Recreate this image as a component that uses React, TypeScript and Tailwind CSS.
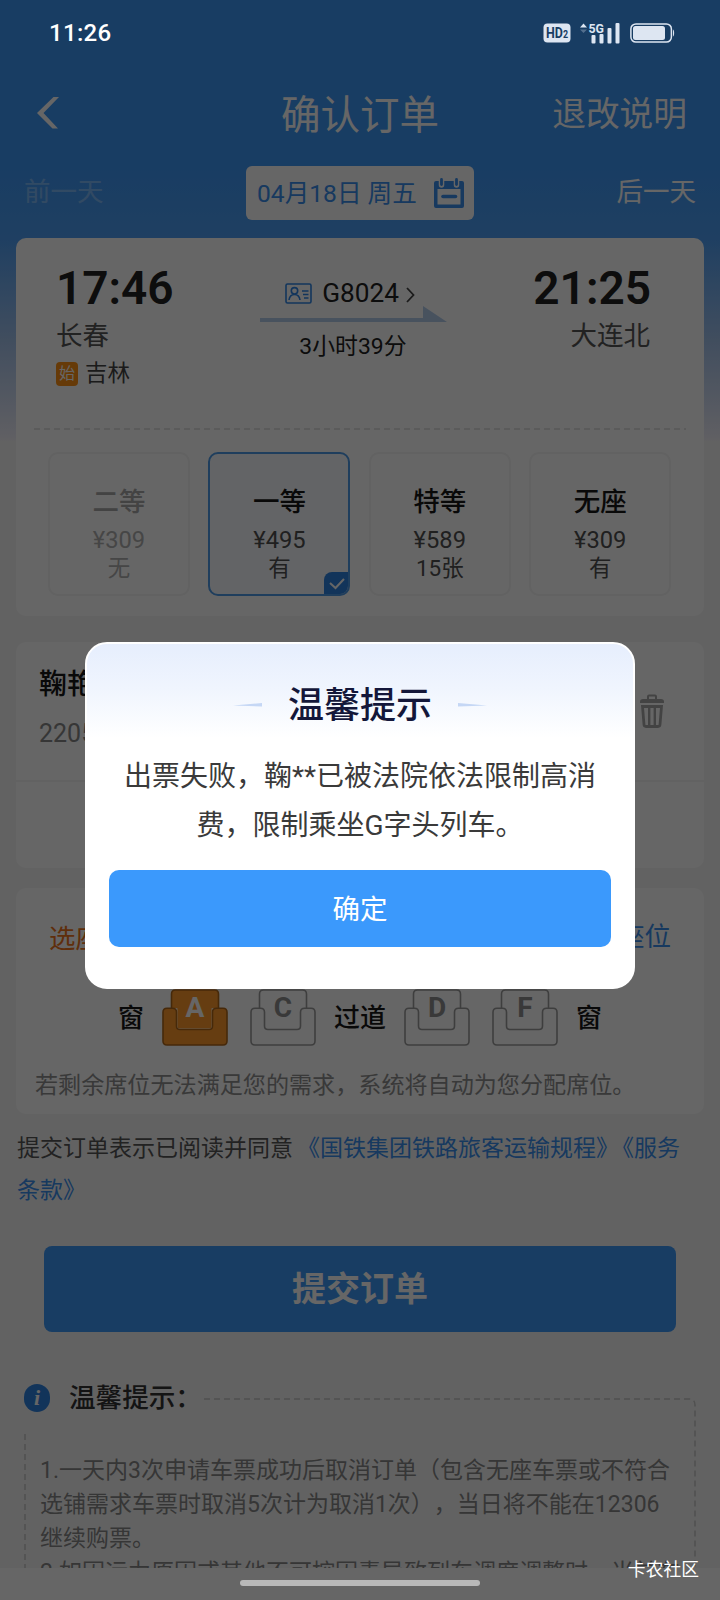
import React, { useState } from 'react';
import clsx from 'clsx';

interface SeatClass {
    id: string;
    name: string;
    price: string;
    stock: string;
    soldOut?: boolean;
}

const seatClasses: SeatClass[] = [
    { id: 'second', name: '二等', price: '¥309', stock: '无', soldOut: true },
    { id: 'first', name: '一等', price: '¥495', stock: '有' },
    { id: 'premium', name: '特等', price: '¥589', stock: '15张' },
    { id: 'none', name: '无座', price: '¥309', stock: '有' },
];

// Status bar stays above the mask, like the system one
function StatusBar() {
    return (
        <div className="relative z-20 flex h-[65px] shrink-0 items-center justify-between pl-[49px] pr-[45px] text-white">
            <span className="text-[24px] font-medium leading-none tracking-[0.3px]">11:26</span>
            <div className="flex items-center text-[#dde6f2]">
                <svg className="mr-[9px]" width="28" height="20" viewBox="0 0 28 20">
                    <rect x="0.500" y="0.500" width="27" height="19" rx="4" fill="currentColor" />
                    <text x="3" y="15" fontSize="14" fontWeight="700" fill="#183d63" textLength="22" lengthAdjust="spacingAndGlyphs">
                        HD<tspan fontSize="10">2</tspan>
                    </text>
                </svg>
                <svg width="41" height="24" viewBox="0 0 41 24" fill="currentColor">
                    <path d="M0 6.500 3.500 2.500 7 6.500z" />
                    <path d="M0 8.500h7L3.500 12z" opacity="0.3" />
                    <text x="8.500" y="11.500" fontSize="13.500" fontWeight="700" textLength="15.500" lengthAdjust="spacingAndGlyphs">5G</text>
                    <rect x="11.500" y="14" width="4" height="8.500" rx="1" />
                    <rect x="19.500" y="13" width="4" height="9.500" rx="1" />
                    <rect x="27.500" y="7" width="4" height="15.500" rx="1" />
                    <rect x="35.500" y="2" width="4" height="20.500" rx="1" />
                </svg>
                <svg className="ml-[9px]" width="45" height="20" viewBox="0 0 45 20">
                    <rect x="0.900" y="0.900" width="40.500" height="18.200" rx="5" fill="none" stroke="currentColor" strokeWidth="1.500" />
                    <rect x="3" y="3" width="32" height="14" rx="2.500" fill="currentColor" />
                    <path d="M43 6.500c1.500.5 1.500 6.500 0 7z" fill="currentColor" />
                </svg>
            </div>
        </div>
    );
}

function CalendarIcon() {
    return (
        <svg width="30" height="31" viewBox="0 0 30 31" className="text-[#3a8fee]">
            <path d="M2 3h26a2 2 0 0 1 2 2v23a2 2 0 0 1-2 2H2a2 2 0 0 1-2-2V5a2 2 0 0 1 2-2zm1.500 8v15.500h23V11z" fill="currentColor" fillRule="evenodd" />
            <path d="M7.500 0v7M22.500 0v7" stroke="white" strokeWidth="5.500" strokeLinecap="round" />
            <path d="M7.500 1.500v5M22.500 1.500v5" stroke="currentColor" strokeWidth="2.800" strokeLinecap="round" />
            <path d="M9 18.500h12.500" stroke="currentColor" strokeWidth="3.600" strokeLinecap="round" />
        </svg>
    );
}

function IdCardIcon() {
    return (
        <svg width="27" height="21" viewBox="0 0 27 21" fill="none" stroke="#2f86e6" strokeWidth="1.600">
            <rect x="1" y="1" width="25" height="19" rx="1.500" />
            <circle cx="9.500" cy="7.800" r="3.200" />
            <path d="M4 17c.5-3.500 2.300-5.500 5.500-5.500S14.500 13.500 15 17M17 8h6.500M18 11.500h5.500M19 15h4.500" />
        </svg>
    );
}

function TrashIcon() {
    return (
        <svg width="24" height="35" viewBox="0 0 24 35" fill="none" stroke="#a8a8a8">
            <path d="M0 9V7.500Q0 5 3 5h18q3 0 3 2.500V9z" fill="#a8a8a8" stroke="none" />
            <path d="M8 5V2.500Q8 1.500 9 1.500h6q1 0 1 1V5" strokeWidth="2" />
            <path d="M2.500 12.500h19l-1.500 18q-.1 2-2 2H6q-1.900 0-2-2z" strokeWidth="2.800" />
            <path d="M9.200 13v19M14.800 13v19" strokeWidth="2.400" />
        </svg>
    );
}

function Seat({ label, selected }: { label: string; selected?: boolean }) {
    const stroke = selected ? '#b0661a' : '#9c9c9c';
    const fill = selected ? '#ff9a2b' : 'none';
    return (
        <svg width="66" height="57" viewBox="0 0 66 57" stroke={stroke} strokeWidth="1.600" strokeLinejoin="round">
            <path d="M9.500 19.200V5q0-4 4-4h39q4 0 4 4v14.200" fill={fill} />
            <path
                d="M5 19.200h5.500q4 0 4 4V37q0 3.500 3.500 3.500h29q3.500 0 3.500-3.500V23.200q0-4 4-4H61q4 0 4 4V52q0 4-4 4H5q-4 0-4-4V23.200q0-4 4-4z"
                fill={fill}
            />
            {selected && <path d="M15.400 18h34.200v19q0 2.600-2.600 2.600H18q-2.600 0-2.600-2.600z" fill={fill} stroke="none" />}
            <text x="33" y="28" textAnchor="middle" fontSize="28" fontWeight="700" stroke="none" fill={selected ? '#ffffff' : '#8f8f8f'}>
                {label}
            </text>
        </svg>
    );
}

export default function App() {
    const [seatClass, setSeatClass] = useState('first');
    const [seat] = useState('A');
    const [showTip, setShowTip] = useState(true);

    return (
        <div
            lang="zh-CN"
            className="relative flex h-[1600px] w-[720px] flex-col overflow-hidden bg-[#f6f6f6] bg-[linear-gradient(180deg,#3c98f8_0px,#3c98f8_160px,#4f9ff4_240px,#a3c2ec_340px,#efeef8_438px,#f6f6f6_442px)] font-['Roboto','Noto_Sans_CJK_SC',sans-serif] text-[#333333] [text-spacing-trim:space-all]"
        >
            <StatusBar />

            {/* Title */}
            <div className="grid h-[95px] shrink-0 grid-cols-3 items-center pl-[37px] pr-[33px] text-white">
                <svg width="22" height="32" viewBox="0 0 22 32" fill="white">
                    <path d="M16.500 0H22L6.500 16 21 31.500h-5.500L0 16z" />
                </svg>
                <h1 className="-ml-[4px] whitespace-nowrap pt-[6px] text-center text-[39.500px] leading-none">确认订单</h1>
                <span className="whitespace-nowrap pt-[5px] text-right text-[33.700px] leading-none">退改说明</span>
            </div>

            {/* Date switch */}
            <div className="mt-[6px] flex h-[54px] shrink-0 items-center justify-between pl-[24px] pr-[24px] text-[26.500px] leading-none text-white">
                <span className="w-[140px] pb-[2px] opacity-30">前一天</span>
                <div className="flex h-[54px] w-[228px] items-center justify-between rounded-[6px] bg-white pl-[11px] pr-[10px] text-[24.600px] text-[#3a8fee]">
                    <span className="whitespace-nowrap pt-[2px]">04月18日 周五</span>
                    <CalendarIcon />
                </div>
                <span className="w-[140px] pb-[2px] text-right">后一天</span>
            </div>

            {/* Train card */}
            <div className="mx-[16px] mt-[18px] flex h-[378px] shrink-0 flex-col rounded-[10px] bg-white">
                <div className="flex h-[190px] justify-between pl-[40px] pr-[54px] pt-[27px]">
                    <div className="w-[150px]">
                        <div className="text-[46px] font-semibold leading-[46px] text-[#222222]">17:46</div>
                        <div className="mt-[8px] text-[26.500px] leading-[34px] text-[#555555]">长春</div>
                        <div className="mt-[6px] flex items-center gap-[7px] text-[22.500px] leading-[28px] text-[#444444]">
                            <span className="mt-[2px] flex h-[24px] w-[22px] items-center justify-center rounded-[4px] bg-[#ff9214] text-[16px] leading-none text-white">始</span>
                            吉林
                        </div>
                    </div>
                    <div className="flex w-[190px] flex-col items-center">
                        <div className="mt-[14px] flex items-center pr-[6px] text-[26.200px] leading-[28px] text-[#222222]">
                            <IdCardIcon />
                            <span className="ml-[10px]">G8024</span>
                            <svg className="ml-[7px] mt-[3px]" width="9" height="16" viewBox="0 0 9 16" fill="none" stroke="#444444" strokeWidth="1.800">
                                <path d="m1 1 6.500 7L1 15" />
                            </svg>
                        </div>
                        <svg className="-mt-[2px]" width="187" height="18" viewBox="0 0 187 18" fill="#b4cdec">
                            <path d="M0 13h163v4H0z" />
                            <path d="M163 1v16h24z" />
                        </svg>
                        <div className="mt-[10px] text-[22.900px] leading-[28px] text-[#222222]">3小时39分</div>
                    </div>
                    <div className="w-[150px] text-right">
                        <div className="-mr-px text-[46px] font-semibold leading-[46px] text-[#222222]">21:25</div>
                        <div className="mt-[8px] text-[26.500px] leading-[34px] text-[#555555]">大连北</div>
                    </div>
                </div>
                <div className="ml-[18px] mr-[18px] h-[2px] bg-[repeating-linear-gradient(90deg,#e4e4e4_0px,#e4e4e4_6px,transparent_6px,transparent_10px)]" />
                <div className="ml-[32px] mt-[22px] flex gap-[18.400px]">
                    {seatClasses.map(item => {
                        const active = item.id === seatClass;
                        return (
                            <button
                                key={item.id}
                                disabled={item.soldOut}
                                onClick={() => setSeatClass(item.id)}
                                className={clsx(
                                    'relative flex h-[144px] w-[142px] flex-col items-center overflow-hidden rounded-[10px] border-2 pt-[30px]',
                                    active ? 'border-[#4f9be8] bg-[#f8fbff]' : 'border-[#f4f4f4]',
                                    item.soldOut ? 'text-[#b0b0b0]' : 'text-[#505050]'
                                )}
                            >
                                <span className={clsx('text-[26.500px] font-medium leading-[36px]', item.soldOut ? 'text-[#a8a8a8]' : 'text-[#181818]')}>{item.name}</span>
                                <span className="mt-[6px] text-[23.700px] leading-[28px]">{item.price}</span>
                                <span className="text-[22.500px] leading-[29px]">{item.stock}</span>
                                {active && (
                                    <span className="absolute -bottom-[2px] -right-[2px] flex h-[24px] w-[26px] items-center justify-center rounded-tl-[8px] bg-[#2f83e0]">
                                        <svg width="16" height="12" viewBox="0 0 16 12" fill="none" stroke="white" strokeWidth="2">
                                            <path d="m1 5 5.500 5L15 1" />
                                        </svg>
                                    </span>
                                )}
                            </button>
                        );
                    })}
                </div>
            </div>

            {/* Passenger card */}
            <div className="mx-[16px] mt-[26px] h-[226px] shrink-0 rounded-[10px] bg-white">
                <div className="flex h-[140px] items-center justify-between border-b-2 border-[#f5f5f5] pl-[23px] pr-[40px]">
                    <div className="pb-[7px]">
                        <div className="text-[28px] font-medium leading-[36px] text-[#181818]">鞠艳</div>
                        <div className="mt-[16px] text-[25px] leading-[30px] text-[#888888]">2205</div>
                    </div>
                    <TrashIcon />
                </div>
            </div>

            {/* Seat picking card */}
            <div className="mx-[16px] mt-[20px] h-[226px] shrink-0 rounded-[10px] bg-white">
                <div className="flex h-[101px] items-center justify-between pl-[33px] pr-[33px] text-[26.500px]">
                    <span className="pt-px text-[#ee7420]">选座</span>
                    <span className="pb-[3px] text-[#3a8fee]">座位</span>
                </div>
                <div className="flex h-[57px] items-center pl-[102px] text-[26px] font-medium leading-none text-[#181818]">
                    <span className="mr-[18px]">窗</span>
                    <Seat label="A" selected={seat === 'A'} />
                    <span className="w-[22px]" />
                    <Seat label="C" selected={seat === 'C'} />
                    <span className="mx-[18px]">过道</span>
                    <Seat label="D" selected={seat === 'D'} />
                    <span className="w-[22px]" />
                    <Seat label="F" selected={seat === 'F'} />
                    <span className="ml-[18px]">窗</span>
                </div>
                <p className="mt-[22px] whitespace-nowrap pl-[19px] text-[23.100px] leading-[36px] text-[#8f8f8f]">若剩余席位无法满足您的需求，系统将自动为您分配席位。</p>
            </div>

            <p className="ml-[17px] mt-[14px] w-[690px] shrink-0 whitespace-nowrap text-[23px] leading-[42px] text-[#555555]">
                提交订单表示已阅读并同意
                <span className="ml-[4px] text-[#3a8fee]">《国铁集团铁路旅客运输规程》</span>
                <span className="-ml-[8px] text-[#3a8fee]">
                    《服务
                    <br />
                    条款》
                </span>
            </p>

            <button className="mx-[44px] mt-[34px] h-[86px] shrink-0 rounded-[8px] bg-[#3c98f8] text-[34px] font-bold leading-none text-white">提交订单</button>

            {/* Tips */}
            <div className="mt-[49px] flex h-[34px] shrink-0 items-center pl-[24px] text-[26.600px] font-medium leading-none text-[#333333]">
                <span className="flex h-[28px] w-[26px] items-center justify-center rounded-full bg-[#2f83e0] font-['Liberation_Serif',serif] text-[22px] font-bold italic text-white">i</span>
                <span className="ml-[19px] whitespace-nowrap">温馨提示：</span>
            </div>
            <div className="flex h-[153px] shrink-0 overflow-hidden">
                <div className="ml-[24px] mt-[17px] w-[672px] pl-[16px] pt-[22px] text-[23px] leading-[34px] text-[#888888]">
                    <p className="whitespace-nowrap">1.一天内3次申请车票成功后取消订单（包含无座车票或不符合</p>
                    <p className="whitespace-nowrap">选铺需求车票时取消5次计为取消1次），当日将不能在12306</p>
                    <p className="whitespace-nowrap">继续购票。</p>
                    <p className="whitespace-nowrap">2.如因运力原因或其他不可控因素导致列车调度调整时，当前车</p>
                </div>
            </div>
            {/* dashed frame open at the heading */}
            <svg className="absolute left-0 top-[1390px]" width="720" height="178" fill="none" stroke="#c8c8c8" strokeWidth="1.500" strokeDasharray="6 4">
                <path d="M204 9h485q6 0 6 6v163M25 44v134" />
            </svg>

            {/* Gesture bar */}
            <div className="flex h-[32px] shrink-0 items-center justify-center bg-white">
                <span className="relative z-20 mb-[5px] mt-[3px] h-[6px] w-[240px] rounded-full bg-[#b9b9b9]" />
            </div>

            {showTip && (
                <div className="absolute inset-0 z-10 flex items-start justify-center bg-black/60 pt-[642px]">
                    <div className="flex h-[347px] w-[550px] flex-col items-center rounded-[22px] border-2 border-white bg-white bg-[linear-gradient(180deg,#e6eefd_0px,#f0f5fe_45px,#ffffff_94px)] px-[22px]">
                        <div className="mt-[37px] flex h-[48px] items-center gap-[26px]">
                            <svg width="29" height="4" viewBox="0 0 30 4" fill="#c5d7f5">
                                <path d="M0 2.500 30 0v3.500z" />
                            </svg>
                            <h2 className="whitespace-nowrap pt-[2px] text-[36px] font-medium leading-none text-[#14173a]">温馨提示</h2>
                            <svg width="29" height="4" viewBox="0 0 30 4" fill="#c5d7f5">
                                <path d="M30 2.500 0 0v3.500z" />
                            </svg>
                        </div>
                        <p className="mt-[23px] whitespace-nowrap text-center text-[28px] leading-[49px] text-[#3a3a3a]">
                            出票失败，鞠**已被法院依法限制高消
                            <br />
                            费，限制乘坐G字头列车。
                        </p>
                        <button onClick={() => setShowTip(false)} className="mt-[20px] h-[77px] w-[502px] shrink-0 rounded-[10px] bg-[#3b99fc] pt-[2px] text-[27.500px] leading-none text-white">
                            确定
                        </button>
                    </div>
                </div>
            )}

            <span className="absolute bottom-[18px] right-[21px] z-20 text-[17.800px] leading-[24px] text-white">卡农社区</span>
        </div>
    );
}
